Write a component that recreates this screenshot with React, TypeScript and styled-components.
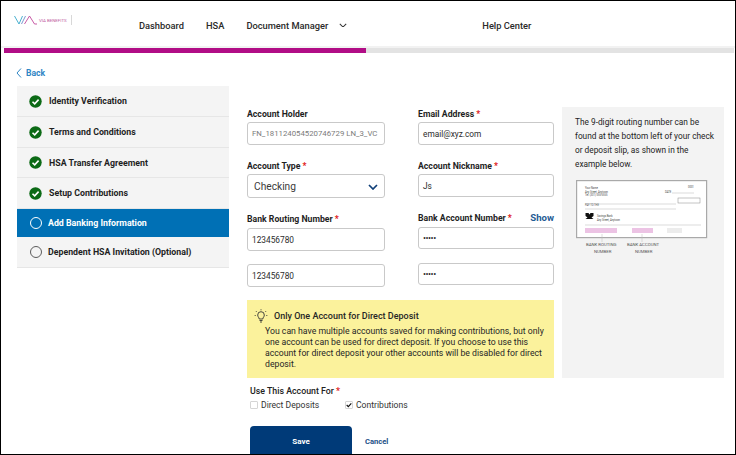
import React from "react";
import styled, { createGlobalStyle } from "styled-components";

const Global = createGlobalStyle`
  html, body { margin: 0; padding: 0; background: #fff; }
  * { box-sizing: border-box; }
  body { font-family: Roboto, "Noto Sans", sans-serif; color: #222; }
`;
const Frame = styled.div`
  width: 736px; height: 455px; border: 1px solid #000; overflow: hidden; background: #fff;
`;
const Header = styled.header`
  height: 47px; display: flex; align-items: flex-start; padding-left: 13px;
  border-bottom: 2px solid #f2f2f2;
`;
const LogoWrap = styled.div`
  display: flex; align-items: center; height: 12px; margin-top: 13px; width: 125px;
`;
const LogoText = styled.span`
  font-size: 4.4px; color: #c05aa0; margin-left: 2px; white-space: nowrap; width: 28px;
`;
const LogoRule = styled.span`
  width: 1px; height: 10px; background: #d8d8d8; margin-left: 4px;
`;
const Nav = styled.nav`
  display: flex; align-items: center; height: 16px; margin-top: 16px;
`;
const NavLink = styled.span<{ $gap: number }>`
  font-size: 9.3px; font-weight: 500; color: #2a2a2a; margin-right: ${p => p.$gap}px; white-space: nowrap;
`;
const ChevronSlot = styled.span`
  display: flex; width: 143px; color: #333;
`;
const Track = styled.div`
  height: 5px; margin: 0 1px 0 3px; background: #e3e3e3;
`;
const Fill = styled.div`
  height: 100%; background: #b10d86;
`;
const BackLink = styled.div`
  display: flex; align-items: center; gap: 4px; height: 14px; margin: 13px 0 6px 15px;
  color: #2f86c4; font-size: 8.6px; font-weight: 700;
`;
const Main = styled.main`
  display: flex; align-items: flex-start; padding-left: 16px;
`;
const Side = styled.aside`
  width: 212px; background: #f4f4f4; flex: none;
`;
const Step = styled.div<{ $h: number; $active?: boolean }>`
  height: ${p => p.$h}px; display: flex; align-items: center; gap: 7px; padding-left: 12px;
  font-size: 8.8px; font-weight: 700; white-space: nowrap;
  color: ${p => (p.$active ? "#fff" : "#1f1f1f")};
  background: ${p => (p.$active ? "#0070b5" : "transparent")};
  border-bottom: 1px solid ${p => (p.$active ? "#0070b5" : "#e6e6e6")};
`;
const Ring = styled.span<{ $active?: boolean }>`
  width: 12px; height: 12px; border-radius: 50%; flex: none; margin: 0 -1px 0 1px;
  border: 1.5px solid ${p => (p.$active ? "#fff" : "#5c5c5c")};
`;
const Center = styled.div`
  width: 307px; margin: 0 8px 0 18px; flex: none; padding-top: 21px;
`;
const Columns = styled.div`
  display: flex; justify-content: space-between;
`;
const Col = styled.div<{ $w: number }>`
  width: ${p => p.$w}px; display: flex; flex-direction: column;
`;
const LabelRow = styled.div<{ $top?: number; $gap?: number }>`
  display: flex; justify-content: space-between; align-items: flex-end; height: 12px;
  margin-top: ${p => p.$top ?? 0}px; margin-bottom: ${p => p.$gap ?? 3}px;
`;
const Label = styled.label`
  font-size: 8.7px; font-weight: 700; color: #1f1f1f; white-space: nowrap;
`;
const Req = styled.span`
  color: #e02020; margin-left: 2px; font-weight: 700;
`;
const Show = styled.span`
  font-size: 9.6px; font-weight: 700; color: #1f5c94;
`;
const Input = styled.div<{ $h?: number; $top?: number; $muted?: boolean }>`
  height: ${p => p.$h ?? 23}px; margin-top: ${p => p.$top ?? 0}px;
  border: 1px solid #c9c9c9; border-radius: 3px; background: #fff;
  display: flex; align-items: center; padding: 0 4px; white-space: nowrap; overflow: hidden;
  font-size: ${p => (p.$muted ? 7.8 : 8.3)}px; color: ${p => (p.$muted ? "#7b7b7b" : "#2c2c2c")};
`;
const SelectBox = styled(Input)`
  justify-content: space-between; padding: 1px 6px 0; font-size: 10.2px; color: #3a3a3a;
`;
const Dots = styled.span`
  font-size: 9px; letter-spacing: -0.5px;
`;
const Notice = styled.section`
  height: 78px; margin-top: 13px; background: #fbf29c; padding: 9px 7px 0 18px; font-size: 8.7px;
  line-height: 11px; color: #262626;
`;
const NoticeHead = styled.div`
  display: flex; align-items: center; gap: 6px; margin-left: -11px; height: 14px; margin-bottom: 3px;
  font-weight: 500; font-size: 9px; white-space: nowrap;
`;
const Use = styled.div`
  margin: 7px 0 0 3px; font-size: 8.8px; font-weight: 500; height: 12px; line-height: 12px;
`;
const Checks = styled.div`
  display: flex; margin: 2px 0 0 3px; height: 12px; align-items: center;
`;
const CheckItem = styled.span<{ $w: number }>`
  display: flex; align-items: center; gap: 3px; width: ${p => p.$w}px;
  font-size: 8.6px; color: #333; white-space: nowrap;
`;
const Box = styled.span`
  width: 8px; height: 8px; border: 1px solid #d5d5d5; border-radius: 1px; display: flex;
  align-items: center; justify-content: center; background: #fff;
`;
const Actions = styled.div`
  display: flex; align-items: center; margin: 15px 0 0 3px;
`;
const Save = styled.button`
  width: 102px; height: 36px; border: 0; border-radius: 4px; background: #003a78; color: #fff;
  font: 700 8px Roboto, sans-serif; padding: 0 0 5px;
`;
const Cancel = styled.span`
  margin: 0 0 5px 13px; font-size: 7.6px; font-weight: 700; color: #1c4f87;
`;
const Help = styled.aside`
  width: 162px; height: 271px; background: #f3f3f3; margin-top: 21px; padding: 8px 7px 0 13px; flex: none;
`;
const HelpText = styled.p`
  margin: 0; font-size: 8.3px; line-height: 14px; color: #232323;
`;
const CheckArt = styled.svg`
  display: block; margin: 9px 0 0 1px;
`;
const ArtLabel = styled.text`
  font-family: Roboto, sans-serif; font-size: 4.3px; fill: #555;
`;
const ArtSmall = styled.text`
  font-family: Roboto, sans-serif; font-size: 2.6px; fill: #444;
`;

const Done = () => (
  <svg width="13" height="13" viewBox="0 0 13 13" style={{ flex: "none" }}>
    <circle cx="6.5" cy="6.5" r="6.2" fill="#0c6a16" />
    <path d="M3.5 6.7 5.7 8.9 9.6 4.6" fill="none" stroke="#fff" strokeWidth="1.6" />
  </svg>
);

const steps: [string, number][] = [
  ["Identity Verification", 31],
  ["Terms and Conditions", 31],
  ["HSA Transfer Agreement", 30],
  ["Setup Contributions", 31],
];

const Chevron = ({ w = 8, color = "currentColor", sw = 1.3 }: { w?: number; color?: string; sw?: number }) => (
  <svg width={w} height={w * 0.6} viewBox="0 0 10 6" fill="none" stroke={color} strokeWidth={sw}>
    <path d="M1 1l4 4 4-4" />
  </svg>
);

export default function App() {
  return (
    <Frame>
      <Global />
      <Header>
        <LogoWrap>
          <svg width="23" height="10" viewBox="0 0 23 10" fill="none" strokeWidth="0.9">
            <path d="M0.500 1 L5 9 L8.500 1" stroke="#35a7c9" />
            <path d="M7.500 9 L11.500 1" stroke="#6b8fc9" />
            <path d="M10.500 9 L15.500 1 L20.500 9 L23 9" stroke="#c2479b" />
          </svg>
          <LogoText>VIA BENEFITS</LogoText>
          <LogoRule />
        </LogoWrap>
        <Nav>
          <NavLink $gap={22}>Dashboard</NavLink>
          <NavLink $gap={22}>HSA</NavLink>
          <NavLink $gap={11}>Document Manager</NavLink>
          <ChevronSlot><Chevron /></ChevronSlot>
          <NavLink $gap={0}>Help Center</NavLink>
        </Nav>
      </Header>
      <Track><Fill style={{ width: "49.6%" }} /></Track>
      <BackLink>
        <svg width="6" height="10" viewBox="0 0 6 10" fill="none" stroke="#2f86c4" strokeWidth="1">
          <path d="M5 0.5 1 5l4 4.500" />
        </svg>
        Back
      </BackLink>
      <Main>
        <Side>
          {steps.map(([t, h]) => (
            <Step key={t} $h={h}><Done />{t}</Step>
          ))}
          <Step $h={28} $active><Ring $active />Add Banking Information</Step>
          <Step $h={31}><Ring />Dependent HSA Invitation (Optional)</Step>
        </Side>
        <Center>
          <Columns>
            <Col $w={138}>
              <LabelRow><Label>Account Holder</Label></LabelRow>
              <Input $muted>FN_181124054520746729 LN_3_VC</Input>
              <LabelRow $top={14}><Label>Account Type<Req>*</Req></Label></LabelRow>
              <SelectBox $h={24}>Checking<Chevron w={10} color="#0f3f78" sw={1.7} /></SelectBox>
              <LabelRow $top={14} $gap={4}><Label>Bank Routing Number<Req>*</Req></Label></LabelRow>
              <Input>123456780</Input>
              <Input $top={13}>123456780</Input>
            </Col>
            <Col $w={136}>
              <LabelRow><Label>Email Address<Req>*</Req></Label></LabelRow>
              <Input>email@xyz.com</Input>
              <LabelRow $top={14}><Label>Account Nickname<Req>*</Req></Label></LabelRow>
              <Input>Js</Input>
              <LabelRow $top={14} $gap={4}><Label>Bank Account Number<Req>*</Req></Label><Show>Show</Show></LabelRow>
              <Input $h={22}><Dots>•••••</Dots></Input>
              <Input $h={22} $top={14}><Dots>•••••</Dots></Input>
            </Col>
          </Columns>
          <Notice>
            <NoticeHead>
              <svg width="14" height="14" viewBox="0 0 14 14" fill="none" stroke="#333" strokeWidth="0.9">
                <path d="M5.200 10c0-1.600-1.500-2-1.500-4a3.300 3.300 0 0 1 6.600 0c0 2-1.500 2.400-1.500 4z" />
                <path d="M5.500 11.500h3M6 13h2M7 .3v1M1.800 2l.8.800M12.200 2l-.8.800M.7 6.500h1M12.300 6.500h1" />
              </svg>
              Only One Account for Direct Deposit
            </NoticeHead>
            You can have multiple accounts saved for making contributions, but only one account can be used for direct deposit. If you choose to use this account for direct deposit your other accounts will be disabled for direct deposit.
          </Notice>
          <Use>Use This Account For<Req>*</Req></Use>
          <Checks>
            <CheckItem $w={95}><Box />Direct Deposits</CheckItem>
            <CheckItem $w={90}>
              <Box>
                <svg width="7" height="6" viewBox="0 0 7 6" fill="none" stroke="#111" strokeWidth="1.300">
                  <path d="M.8 3 2.700 5 6.200 1" />
                </svg>
              </Box>
              Contributions
            </CheckItem>
          </Checks>
          <Actions>
            <Save>Save</Save>
            <Cancel>Cancel</Cancel>
          </Actions>
        </Center>
        <Help>
          <HelpText>The 9-digit routing number can be found at the bottom left of your check or deposit slip, as shown in the example below.</HelpText>
          <CheckArt width="132" height="76" viewBox="0 0 132 76">
            <rect x="0.600" y="0.600" width="130" height="57" fill="#fff" stroke="#a9a9a9" strokeWidth="1.200" />
            <rect x="9" y="48" width="32" height="5" fill="#ecc3e4" />
            <rect x="56" y="48" width="21" height="5" fill="#ecc3e4" />
            <rect x="91" y="48" width="15" height="5" fill="#ececec" />
            <ArtSmall x="9" y="9">Your Name</ArtSmall>
            <ArtSmall x="9" y="12.500">Any Street, Anytown</ArtSmall>
            <ArtSmall x="9" y="16">Tel: (301) 555-5555</ArtSmall>
            <ArtSmall x="9" y="25.500">PAY TO THE</ArtSmall>
            <ArtSmall x="21" y="37">Savings Bank</ArtSmall>
            <ArtSmall x="21" y="40.500">Any Street, Anytown</ArtSmall>
            <ArtSmall x="112" y="8">0001</ArtSmall>
            <ArtSmall x="89" y="12.500">DATE</ArtSmall>
            <path d="M96 13h22M9 24h91M9 29h91M9 45h116" stroke="#b5b5b5" strokeWidth="0.500" />
            <rect x="102" y="18" width="22" height="5" fill="#fff" stroke="#888" strokeWidth="0.500" />
            <path d="M9.500 33h3l1 1.500 1-1.500h3v3l-2 1.500 2 1.500h-8l2-1.500-2-1.500z" fill="#111" />
            <path d="M26 54v8M66 54v8" stroke="#bbb" strokeWidth="0.500" />
            <ArtLabel x="10" y="66">BANK ROUTING</ArtLabel>
            <ArtLabel x="18" y="73">NUMBER</ArtLabel>
            <ArtLabel x="51" y="66">BANK ACCOUNT</ArtLabel>
            <ArtLabel x="59" y="73">NUMBER</ArtLabel>
          </CheckArt>
        </Help>
      </Main>
    </Frame>
  );
}
